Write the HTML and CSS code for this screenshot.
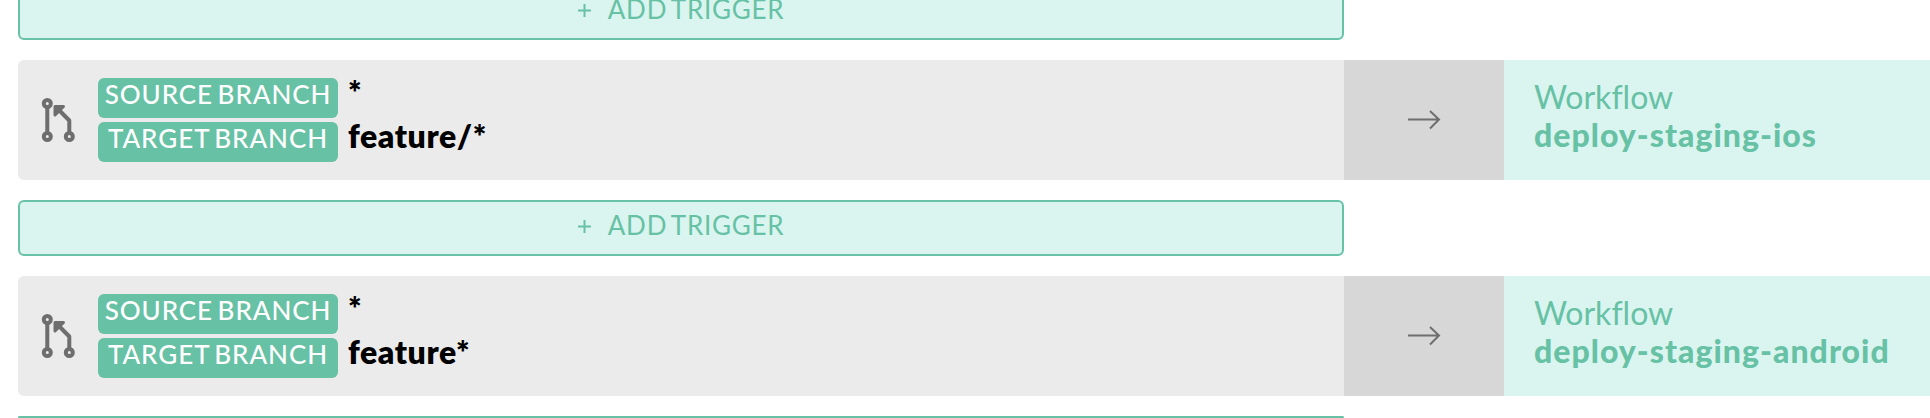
FILE: index.html
```html
<!DOCTYPE html>
<html lang="en">
<head>
<meta charset="utf-8">
<title>Triggers</title>
<link rel="stylesheet" href="styles.css">
</head>
<body>
<main class="triggers">
  <button class="add"><svg class="plus" viewBox="0 0 13 13"><path d="M6.5 0v13M0 6.5h13"/></svg><span class="add-label">ADD TRIGGER</span></button>
  <section class="row">
    <div class="condition">
      <svg class="pull" viewBox="0 0 36 46"><path class="line" d="M6.3 9v27M28.3 36V23.500L17 12"/><path class="head" d="M14 9.500h8.500L14 18z"/><circle cx="6.300" cy="6.500" r="3.500"/><circle cx="6.300" cy="39.500" r="3.500"/><circle cx="28.300" cy="39.500" r="3.500"/></svg>
      <div class="branches">
        <span class="chip source">SOURCE BRANCH</span><strong class="pattern">*</strong>
        <span class="chip target">TARGET BRANCH</span><strong class="pattern path">feature/*</strong>
      </div>
    </div>
    <div class="link"><svg class="arrow" viewBox="0 0 34 22"><path d="M1 10.500h31M23 2l9 8.500-9 9"/></svg></div>
    <div class="workflow"><span class="kind">Workflow</span><strong class="name">deploy-staging-ios</strong></div>
  </section>
  <button class="add"><svg class="plus" viewBox="0 0 13 13"><path d="M6.5 0v13M0 6.5h13"/></svg><span class="add-label">ADD TRIGGER</span></button>
  <section class="row">
    <div class="condition">
      <svg class="pull" viewBox="0 0 36 46"><path class="line" d="M6.3 9v27M28.3 36V23.500L17 12"/><path class="head" d="M14 9.500h8.500L14 18z"/><circle cx="6.300" cy="6.500" r="3.500"/><circle cx="6.300" cy="39.500" r="3.500"/><circle cx="28.300" cy="39.500" r="3.500"/></svg>
      <div class="branches">
        <span class="chip source">SOURCE BRANCH</span><strong class="pattern">*</strong>
        <span class="chip target">TARGET BRANCH</span><strong class="pattern path">feature*</strong>
      </div>
    </div>
    <div class="link"><svg class="arrow" viewBox="0 0 34 22"><path d="M1 10.500h31M23 2l9 8.500-9 9"/></svg></div>
    <div class="workflow"><span class="kind">Workflow</span><strong class="name">deploy-staging-android</strong></div>
  </section>
  <div class="add next"></div>
</main>
</body>
</html>
```
FILE: styles.css
```css
* { box-sizing: border-box; }
body {
  margin: 0;
  height: 418px;
  overflow: hidden;
  background: #fff;
  font-family: Lato, sans-serif;
  font-variant-ligatures: none;
}
.triggers {
  display: flex;
  flex-direction: column;
  gap: 20px;
  margin-top: -16px;
  padding-left: 18px;
}
.add {
  display: flex;
  align-items: center;
  justify-content: center;
  gap: 17px;
  flex: none;
  width: 1326px;
  height: 56px;
  padding: 0 0 4px;
  border: 2px solid #67c1a5;
  border-radius: 6px;
  background: #daf5ef;
  color: #67c1a5;
  font: 400 26px/38px Lato, sans-serif;
  letter-spacing: 0.75px;
  word-spacing: -3px;
}
.add-label { margin-top: -2px; }
.next { height: 2px; padding: 0; border-width: 2px 2px 0; border-radius: 6px 6px 0 0; }
.plus { width: 13px; height: 13px; fill: none; stroke: #67c1a5; stroke-width: 2; }
.row { display: flex; flex: none; height: 120px; }
.condition {
  display: flex;
  align-items: center;
  gap: 21px;
  width: 1326px;
  padding-left: 23px;
  border-radius: 6px 0 0 6px;
  background: #ebebeb;
}
.pull { width: 36px; height: 46px; fill: none; stroke: #6e6e6e; stroke-width: 4; }
.pull .line { stroke-linejoin: round; }
.pull .head { fill: #6e6e6e; stroke-width: 3; stroke-linejoin: round; }
.pull circle { fill: #ebebeb; }
.branches {
  display: grid;
  grid-template-columns: 240px auto;
  grid-auto-rows: 40px;
  gap: 4px 10px;
}
.chip {
  border-radius: 6px;
  background: #67c1a5;
  color: #fff;
  font-size: 26px;
  font-weight: 500;
  line-height: 33px;
  letter-spacing: 0.95px;
  word-spacing: -3px;
  text-align: center;
  white-space: nowrap;
}
.pattern {
  color: #000;
  font-size: 32px;
  font-weight: 800;
  line-height: 28px;
  letter-spacing: 0.6px;
}
.link {
  display: flex;
  align-items: center;
  justify-content: center;
  width: 160px;
  background: #d7d7d7;
}
.arrow { width: 34px; height: 22px; fill: none; stroke: #6e6e6e; stroke-width: 2; }
.workflow {
  display: flex;
  flex-direction: column;
  flex: 1;
  padding: 18px 0 0 30px;
  background: #daf5ef;
  color: #67c1a5;
  font-size: 32px;
  line-height: 38px;
  white-space: nowrap;
}
.name { font-weight: 900; letter-spacing: 1.02px; }
```
